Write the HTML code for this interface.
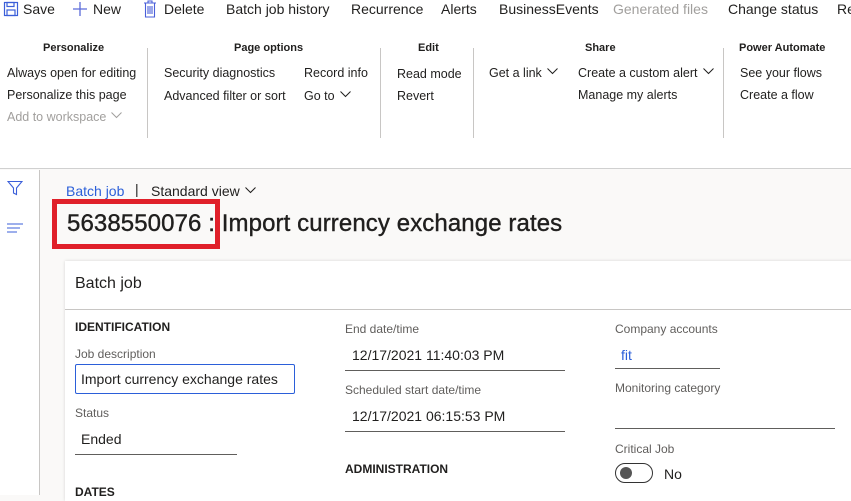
<!DOCTYPE html>
<html><head><style>
*{margin:0;padding:0;box-sizing:border-box}
body{width:851px;height:495px;overflow:hidden;background:#faf9f8;font-family:"Segoe UI","Liberation Sans",sans-serif;color:#201f1e;position:relative}
.a{position:absolute;white-space:nowrap}
.top{position:absolute;left:0;top:0;width:851px;height:169px;background:#fff;border-bottom:1px solid #d0d0d0}
.tb{font-size:14px;top:1px}
.gh{font-size:11px;font-weight:bold;top:42px}
.it{font-size:12.5px}
.sep{position:absolute;width:1px;background:#c8c6c4;top:48px;height:90px}
.lbl{font-size:12px;color:#605e5c}
.val{font-size:14px}
.ul{position:absolute;height:1px;background:#605e5c}
.ch{display:inline-block;width:11px;height:7px;margin-left:5px;vertical-align:2px}
</style></head><body>
<svg width="0" height="0" style="position:absolute"><defs><symbol id="c" viewBox="0 0 11 7"><path d="M0.5 0.5L5.5 5.5L10.5 0.5" fill="none" stroke="currentColor" stroke-width="1"/></symbol></defs></svg>
<div class="top">
<svg class="a" style="left:3px;top:1px" width="16" height="16" viewBox="0 0 16 16" fill="none" stroke="#3b5fd9" stroke-width="1.2"><rect x="1.5" y="1.5" width="13" height="13"/><rect x="4" y="1.5" width="7" height="4"/><rect x="4" y="9" width="8" height="5.5"/></svg>
<span class="a tb" style="left:23px">Save</span>
<svg class="a" style="left:72px;top:1px" width="16" height="16" viewBox="0 0 16 16" stroke="#5b6bd9" stroke-width="1.3"><path d="M8 1v14M1 8h14"/></svg>
<span class="a tb" style="left:93px">New</span>
<svg class="a" style="left:143px;top:0px" width="14" height="18" viewBox="0 0 14 18" fill="none" stroke="#4a5fd9" stroke-width="1.1"><path d="M1 3h12M5 3V1h4v2M2.5 3v14h9V3M5 6v8M7 6v8M9 6v8"/></svg>
<span class="a tb" style="left:164px">Delete</span>
<span class="a tb" style="left:226px">Batch job history</span>
<span class="a tb" style="left:351px">Recurrence</span>
<span class="a tb" style="left:441px">Alerts</span>
<span class="a tb" style="left:499px">BusinessEvents</span>
<span class="a tb" style="left:613px;color:#a19f9d">Generated files</span>
<span class="a tb" style="left:728px">Change status</span>
<span class="a tb" style="left:837px">Re</span>

<span class="a gh" style="left:43px">Personalize</span>
<span class="a it" style="left:7px;top:66px">Always open for editing</span>
<span class="a it" style="left:7px;top:88px">Personalize this page</span>
<span class="a it" style="left:7px;top:110px;color:#a19f9d">Add to workspace<svg class="ch"><use href="#c"/></svg></span>
<div class="sep" style="left:147px"></div>
<span class="a gh" style="left:234px">Page options</span>
<span class="a it" style="left:164px;top:66px">Security diagnostics</span>
<span class="a it" style="left:164px;top:89px">Advanced filter or sort</span>
<span class="a it" style="left:304px;top:66px">Record info</span>
<span class="a it" style="left:304px;top:89px">Go to<svg class="ch"><use href="#c"/></svg></span>
<div class="sep" style="left:380px"></div>
<span class="a gh" style="left:418px">Edit</span>
<span class="a it" style="left:397px;top:67px">Read mode</span>
<span class="a it" style="left:397px;top:89px">Revert</span>
<div class="sep" style="left:473px"></div>
<span class="a gh" style="left:585px">Share</span>
<span class="a it" style="left:489px;top:66px">Get a link<svg class="ch"><use href="#c"/></svg></span>
<span class="a it" style="left:578px;top:66px">Create a custom alert<svg class="ch"><use href="#c"/></svg></span>
<span class="a it" style="left:578px;top:88px">Manage my alerts</span>
<div class="sep" style="left:723px"></div>
<span class="a gh" style="left:739px">Power Automate</span>
<span class="a it" style="left:740px;top:66px">See your flows</span>
<span class="a it" style="left:740px;top:88px">Create a flow</span>
</div>

<div class="a" style="left:0;top:170px;width:40px;height:325px;background:#fff;border-right:1px solid #c8c6c4"></div>
<svg class="a" style="left:7px;top:180px" width="16" height="16" viewBox="0 0 16 16" fill="none" stroke="#3b5fd9" stroke-width="1.1"><path d="M1 1.5h14L9.5 8v6.5l-3-1.5V8z"/></svg>
<svg class="a" style="left:7px;top:222px" width="16" height="12" viewBox="0 0 16 12" stroke="#3b5fd9" stroke-width="1.1"><path d="M0 2h16M0 6h13M0 10h10"/></svg>

<span class="a" style="left:66px;top:183px;font-size:14px;color:#2b5fd9">Batch job</span>
<span class="a" style="left:135px;top:181px;font-size:14px">|</span>
<span class="a" style="left:151px;top:183px;font-size:14px">Standard view<svg class="ch"><use href="#c"/></svg></span>
<span class="a" style="left:67px;top:210px;font-size:24px;letter-spacing:0.1px;-webkit-text-stroke:0.4px #201f1e">5638550076 : Import currency exchange rates</span>
<div class="a" style="left:52px;top:199px;width:168px;height:50px;border:5px solid #e0202a"></div>

<div class="a" style="left:65px;top:261px;width:800px;height:240px;background:#fff;box-shadow:0 0 3px rgba(0,0,0,.15)"></div>
<span class="a" style="left:75px;top:275px;font-size:16px">Batch job</span>
<div class="a" style="left:65px;top:309px;width:786px;height:1px;background:#c8c6c4"></div>

<span class="a" style="left:75px;top:320px;font-size:12px;font-weight:bold">IDENTIFICATION</span>
<span class="a lbl" style="left:75px;top:347px">Job description</span>
<div class="a" style="left:75px;top:364px;width:220px;height:30px;border:1px solid #2b5fd9;border-radius:2px"></div>
<span class="a val" style="left:81px;top:371px">Import currency exchange rates</span>
<span class="a lbl" style="left:75px;top:406px">Status</span>
<span class="a val" style="left:81px;top:431px">Ended</span>
<div class="ul" style="left:75px;top:454px;width:162px"></div>
<span class="a" style="left:75px;top:485px;font-size:12px;font-weight:bold">DATES</span>

<span class="a lbl" style="left:345px;top:322px">End date/time</span>
<span class="a val" style="left:352px;top:347px">12/17/2021 11:40:03 PM</span>
<div class="ul" style="left:345px;top:370px;width:220px"></div>
<span class="a lbl" style="left:345px;top:383px">Scheduled start date/time</span>
<span class="a val" style="left:352px;top:408px">12/17/2021 06:15:53 PM</span>
<div class="ul" style="left:345px;top:431px;width:220px"></div>
<span class="a" style="left:345px;top:462px;font-size:12px;font-weight:bold">ADMINISTRATION</span>

<span class="a lbl" style="left:615px;top:322px">Company accounts</span>
<span class="a val" style="left:621px;top:347px;color:#2b5fd9">fit</span>
<div class="ul" style="left:615px;top:368px;width:105px"></div>
<span class="a lbl" style="left:615px;top:381px">Monitoring category</span>
<div class="ul" style="left:615px;top:428px;width:220px"></div>
<span class="a lbl" style="left:615px;top:442px">Critical Job</span>
<div class="a" style="left:615px;top:463px;width:38px;height:20px;border:1px solid #333;border-radius:10px"></div>
<div class="a" style="left:620px;top:467px;width:12px;height:12px;border-radius:6px;background:#555"></div>
<span class="a val" style="left:664px;top:466px">No</span>
</body></html>
